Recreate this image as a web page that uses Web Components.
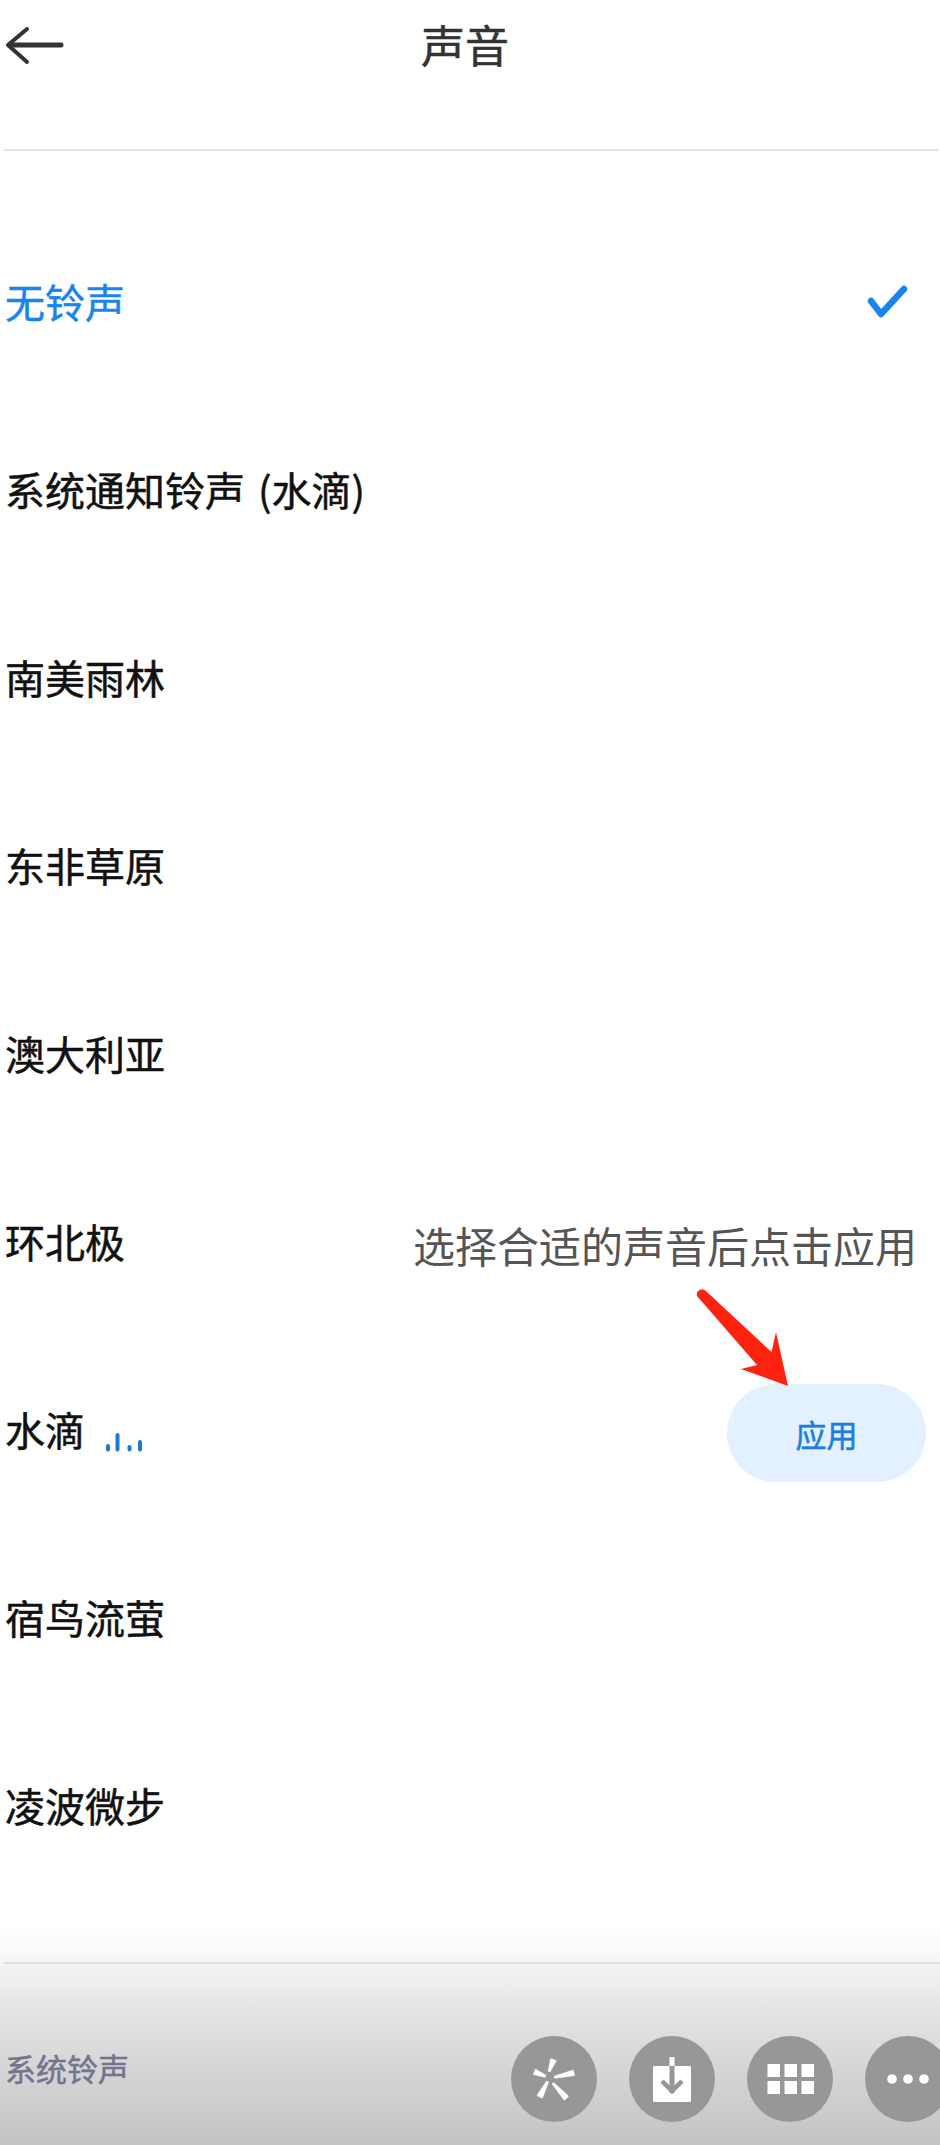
<!DOCTYPE html>
<html lang="zh"><head><meta charset="utf-8"><title>声音</title>
<style>
html,body{margin:0;padding:0;background:#fff}
body{font-family:"Noto Sans CJK SC","Noto Sans",sans-serif;width:940px;height:2145px;overflow:hidden}
sound-page{display:flex}
</style></head><body>
<sound-page>
  <sound-header slot="header">声音</sound-header>
  <sound-row selected>无铃声</sound-row>
  <sound-row>系统通知铃声 (水滴)</sound-row>
  <sound-row>南美雨林</sound-row>
  <sound-row>东非草原</sound-row>
  <sound-row>澳大利亚</sound-row>
  <sound-row hint="选择合适的声音后点击应用">环北极</sound-row>
  <sound-row playing>水滴</sound-row>
  <sound-row>宿鸟流萤</sound-row>
  <sound-row>凌波微步</sound-row>
  <sound-footer slot="footer">系统铃声</sound-footer>
</sound-page>
<script>
function define(name, html, attach){
  customElements.define(name, class extends HTMLElement{
    constructor(){super();const r=this.attachShadow({mode:'open'});r.innerHTML=html;}
    connectedCallback(){ if(attach) attach(this, this.shadowRoot); }
  });
}
function petal(x1,y1,x2,y2){
  const dx=x2-x1,dy=y2-y1,l=Math.hypot(dx,dy),nx=-dy/l,ny=dx/l,a=0.4,b=2.2;
  const p=[[x1+nx*a,y1+ny*a],[x2+nx*b,y2+ny*b],[x2-nx*b,y2-ny*b],[x1-nx*a,y1-ny*a]];
  return '<polygon points="'+p.map(q=>q[0].toFixed(1)+','+q[1].toFixed(1)).join(' ')+'"/>';
}
define('sound-page',`<style>
:host{display:flex;flex-direction:column;width:940px;height:2145px;position:relative;overflow:hidden;background:#fff}
.list{display:flex;flex-direction:column;padding-top:56px}
.spacer{flex:1}
</style><slot name="header"></slot><div class="list"><slot></slot></div><div class="spacer"></div><slot name="footer"></slot>`);

define('sound-header',`<style>
:host{display:block;height:152px;box-sizing:border-box;position:relative}
.bar{display:flex;align-items:flex-start;justify-content:center;height:90px;padding-right:10px;box-sizing:border-box}
.title{font-size:44px;line-height:88px;color:#333;font-weight:400;-webkit-text-stroke:.5px #333}
svg{position:absolute;left:0;top:0}
.rule{position:absolute;left:4px;right:1px;top:149px;height:2px;background:#e4e4e4}
</style><div class="bar"><span class="title"><slot></slot></span></div>
<svg width="70" height="80" fill="none" stroke="#333" stroke-linecap="round" stroke-linejoin="round"><path d="M27 29 L8 45 L27 62" stroke-width="4"/><path d="M9 45 H61" stroke-width="5"/></svg>
<div class="rule"></div>`);

define('sound-row',`<style>
:host{display:flex;align-items:center;justify-content:space-between;height:188px;box-sizing:border-box;padding:0 14px 0 5px;position:relative;font-size:40px;color:#111;font-weight:400;-webkit-text-stroke:.5px currentColor;word-spacing:4px}
:host([selected]){color:#1a84ee;padding-right:31px}
.name{display:flex;align-items:center;gap:20px;line-height:56px;margin-top:-3px}
.hint{font-size:42px;font-weight:400;color:#555;line-height:60px;margin:0 9px 0 0;position:relative;top:3px;white-space:nowrap;-webkit-text-stroke:0}
.apply{display:flex;align-items:center;justify-content:center;width:199px;height:98px;border-radius:49px;background:#e3f0fd;color:#1c7fe0;font-size:31px;font-weight:400;position:relative;top:3px;-webkit-text-stroke:.5px #1c7fe0}
svg{display:block;flex:none}
.eq{position:relative;top:13px}
.arrow{position:absolute;left:690px;top:-53px}
</style><span class="name"><slot></slot><span id="eq"></span></span><span id="end"></span>`,
(el,r)=>{
  const end=r.getElementById('end'), eq=r.getElementById('eq');
  if(el.hasAttribute('selected')) end.innerHTML='<svg width="42" height="34" fill="none" stroke="#1a84ee" stroke-width="6.500" stroke-linecap="round" stroke-linejoin="round"><path d="M4 16 L14 29 L37 4"/></svg>';
  if(el.hasAttribute('hint')){end.className='hint';end.textContent=el.getAttribute('hint');}
  if(el.hasAttribute('playing')){
    eq.className='eq';
    eq.innerHTML='<svg width="38" height="20" fill="none" stroke="#1f78d1" stroke-width="4" stroke-linecap="round"><path d="M3 14 V17.500 M12.500 3 V17.500 M24.500 15 V17.500 M35 10 V17.500"/></svg>';
    end.className='apply';end.textContent='应用';
    const a=document.createElementNS('http://www.w3.org/2000/svg','svg');
    a.setAttribute('class','arrow');a.setAttribute('width','110');a.setAttribute('height','110');
    a.innerHTML='<path d="M7 13 Q6 8 11 6.500 Q14 5.500 17 9 L81.500 69 L86 49 L98 103 L51 86 L67 82 Z" fill="#fe2311"/>';
    r.appendChild(a);
  }
});

define('round-icon',`<style>
:host{display:flex;flex:none;width:86px;height:86px;border-radius:50%;background:#979797;align-items:center;justify-content:center}
::slotted(svg){display:block}
</style><slot></slot>`);

define('sound-footer',`<style>
:host{display:block;height:225px;position:relative;box-sizing:border-box;background:linear-gradient(to bottom,#fff 0,#fbfbfb 12%,#f2f2f2 22%,#e4e4e4 40%,#d6d6d6 65%,#c3c3c3 100%)}
.rule{position:absolute;left:4px;right:0;top:42px;height:2px;background:#dedede}
.row{display:flex;justify-content:space-between;align-items:center;height:86px;margin-top:116px;position:absolute;left:5px;top:0;width:946px}
.label{font-size:31px;color:#74748c;font-weight:400;-webkit-text-stroke:.5px #74748c;line-height:40px;position:relative;top:-11px}
.icons{display:flex;gap:32px}
</style><div class="rule"></div><div class="row"><span class="label"><slot></slot></span><div class="icons">
<round-icon><svg width="60" height="60" fill="#fff" stroke="#fff" stroke-width="2" stroke-linejoin="round" viewBox="0 0 60 60">${petal(25.3,22,29.3,11.3)}${petal(31,28,49.3,24)}${petal(29.3,34.7,42,48.7)}${petal(23.3,33,16,47.3)}${petal(21,27,11,23)}</svg></round-icon>
<round-icon><svg width="60" height="60" viewBox="0 0 60 60"><rect x="11" y="17" width="38" height="36" rx="1.500" fill="#fff"/><rect x="27.500" y="8" width="5" height="9" fill="#fff"/><path d="M30 17 V44" stroke="#979797" stroke-width="5"/><path d="M20 32 L30 42 L40 32" fill="none" stroke="#979797" stroke-width="4.500"/></svg></round-icon>
<round-icon><svg width="60" height="60" viewBox="0 0 60 60" fill="#fff"><rect x="7.500" y="15" width="12.500" height="13"/><rect x="24.500" y="15" width="12.500" height="13"/><rect x="41.500" y="15" width="12.500" height="13"/><rect x="7.500" y="32" width="12.500" height="13"/><rect x="24.500" y="32" width="12.500" height="13"/><rect x="41.500" y="32" width="12.500" height="13"/></svg></round-icon>
<round-icon><svg width="60" height="60" viewBox="0 0 60 60" fill="#fff"><circle cx="14" cy="30" r="4.800"/><circle cx="30" cy="30" r="4.800"/><circle cx="46" cy="30" r="4.800"/></svg></round-icon>
</div></div>`);
</script>
</body></html>
